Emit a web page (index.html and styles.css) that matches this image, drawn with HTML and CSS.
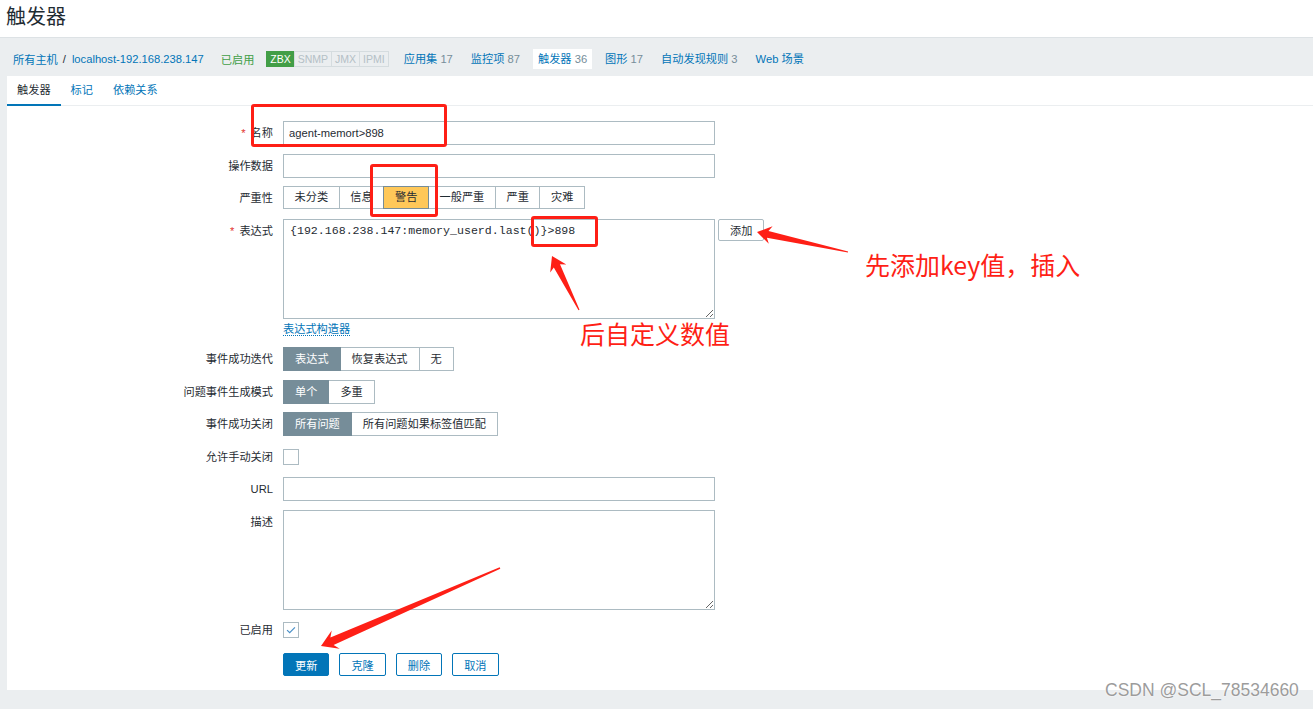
FILE: index.html
```html
<!DOCTYPE html>
<html lang="zh-CN">
<head>
<meta charset="utf-8">
<title>触发器</title>
<link rel="stylesheet" href="styles.css">
</head>
<body>
<header class="page-header">
  <h1 class="page-title">触发器</h1>
</header>

<nav class="host-nav">
  <ul class="breadcrumbs">
    <li><a href="#">所有主机</a></li>
    <li class="sep">/</li>
    <li><a href="#">localhost-192.168.238.147</a></li>
  </ul>
  <span class="status-on">已启用</span>
  <div class="avail">
    <span class="avail-item avail-on">ZBX</span><span class="avail-item">SNMP</span><span class="avail-item">JMX</span><span class="avail-item">IPMI</span>
  </div>
  <ul class="host-tabs">
    <li><a href="#">应用集</a> <span class="count">17</span></li>
    <li><a href="#">监控项</a> <span class="count">87</span></li>
    <li class="selected"><a href="#">触发器</a> <span class="count">36</span></li>
    <li><a href="#">图形</a> <span class="count">17</span></li>
    <li><a href="#">自动发现规则</a> <span class="count">3</span></li>
    <li><a href="#">Web 场景</a></li>
  </ul>
</nav>

<main class="panel">
  <ul class="tabs">
    <li class="tab active">触发器</li>
    <li class="tab">标记</li>
    <li class="tab">依赖关系</li>
  </ul>

  <form class="form-grid">
    <label class="form-label required">名称</label>
    <div class="form-field"><input class="text-input" type="text" value="agent-memort&gt;898"></div>

    <label class="form-label">操作数据</label>
    <div class="form-field"><input class="text-input" type="text" value=""></div>

    <label class="form-label">严重性</label>
    <div class="form-field">
      <div class="seg seg-severity">
        <span class="seg-item">未分类</span><span class="seg-item">信息</span><span class="seg-item seg-warning">警告</span><span class="seg-item">一般严重</span><span class="seg-item">严重</span><span class="seg-item">灾难</span>
      </div>
    </div>

    <label class="form-label required">表达式</label>
    <div class="form-field">
      <div class="expr-row">
        <textarea class="text-area mono">{192.168.238.147:memory_userd.last()}&gt;898</textarea>
        <button type="button" class="btn-grey">添加</button>
      </div>
      <div class="link-row"><a href="#" class="dotted-link">表达式构造器</a></div>
    </div>

    <label class="form-label">事件成功迭代</label>
    <div class="form-field">
      <div class="seg">
        <span class="seg-item seg-on">表达式</span><span class="seg-item">恢复表达式</span><span class="seg-item">无</span>
      </div>
    </div>

    <label class="form-label">问题事件生成模式</label>
    <div class="form-field">
      <div class="seg">
        <span class="seg-item seg-on">单个</span><span class="seg-item">多重</span>
      </div>
    </div>

    <label class="form-label">事件成功关闭</label>
    <div class="form-field">
      <div class="seg">
        <span class="seg-item seg-on">所有问题</span><span class="seg-item">所有问题如果标签值匹配</span>
      </div>
    </div>

    <label class="form-label">允许手动关闭</label>
    <div class="form-field check-field"><span class="checkbox"></span></div>

    <label class="form-label">URL</label>
    <div class="form-field"><input class="text-input" type="text" value=""></div>

    <label class="form-label">描述</label>
    <div class="form-field"><textarea class="text-area"></textarea></div>

    <label class="form-label">已启用</label>
    <div class="form-field check-field">
      <span class="checkbox"><svg class="check-mark" viewBox="0 0 16 16" width="14" height="14"><path d="M3.5 8.2 L6.5 11 L12.5 5" fill="none" stroke="#4a90c8" stroke-width="1.4"/></svg></span>
    </div>

    <div class="form-buttons">
      <button type="button" class="btn-main">更新</button>
      <button type="button" class="btn-alt">克隆</button>
      <button type="button" class="btn-alt">删除</button>
      <button type="button" class="btn-alt">取消</button>
    </div>
  </form>
</main>

<div class="annotations">
  <div class="mark-box box-name"></div>
  <div class="mark-box box-sev"></div>
  <div class="mark-box box-expr"></div>
  <svg class="arrows" width="1313" height="709" viewBox="0 0 1313 709">
    <polygon fill="#fe1f16" points="579.5,309.7 560.0,264.2 566.3,264.5 552,256 550.2,272.5 553.8,267.4 578.5,310.3"/>
    <polygon fill="#fe1f16" points="848.1,251.4 768.5,231.0 772.6,226.2 757,232 768.8,243.8 766.9,237.8 847.9,252.6"/>
    <polygon fill="#fe1f16" points="499.7,567.3 330.4,637.5 331.7,630.4 321,646 339.7,648.8 333.6,644.9 500.3,568.7"/>
  </svg>
  <div class="note note-add">先添加key值，插入</div>
  <div class="note note-value">后自定义数值</div>
</div>

<div class="watermark">CSDN @SCL_78534660</div>
</body>
</html>
```

FILE: styles.css
```css
* {
  box-sizing: border-box;
}

html, body {
  margin: 0;
  padding: 0;
}

body {
  position: relative;
  width: 1313px;
  height: 709px;
  overflow: hidden;
  background: #ebeef0;
  font-family: "Liberation Sans", "Noto Sans CJK SC", sans-serif;
  font-size: 11.2px;
  color: #1f2c33;
}

a {
  color: #0275b8;
  text-decoration: none;
}

ul {
  list-style: none;
  margin: 0;
  padding: 0;
}

/* ---------- header ---------- */
.page-header {
  height: 38px;
  background: #fff;
  border-bottom: 1px solid #dde2e5;
  padding-left: 6px;
}

.page-title {
  margin: 0;
  font-size: 20px;
  font-weight: normal;
  line-height: 34px;
  color: #1f2c33;
}

/* ---------- host navigation ---------- */
.host-nav {
  height: 38px;
  display: flex;
  align-items: center;
  padding: 4px 0 0 13px;
}

.breadcrumbs {
  display: flex;
  align-items: center;
}

.breadcrumbs .sep {
  margin: 0 6px 0 5px;
  color: #1f2c33;
}

.status-on {
  margin-left: 17px;
  color: #429e47;
}

.avail {
  display: flex;
  margin-left: 12px;
}

.avail-item {
  font-size: 10.5px;
  line-height: 14px;
  padding: 0 3px;
  border: 1px solid #d5dcdf;
  margin-left: -1px;
  color: #b4c0c6;
}

.avail-item:first-child {
  margin-left: 0;
}

.avail-on {
  background: #429e47;
  border-color: #429e47;
  color: #fff;
}

.host-tabs {
  display: flex;
  margin-left: 10px;
}

.host-tabs li {
  padding: 3px 5px;
  line-height: 14px;
  margin-right: 8px;
  white-space: nowrap;
}

.host-tabs li.selected {
  background: #fff;
}

.count {
  color: #768d99;
}

/* ---------- panel ---------- */
.panel {
  margin-left: 7px;
  height: 614px;
  background: #fff;
}

.tabs {
  display: flex;
  height: 30px;
  box-shadow: inset 0 -1px 0 #ebeef0;
}

.tab {
  padding: 0 10px;
  line-height: 28px;
  border-bottom: 2px solid transparent;
  color: #0275b8;
}

.tab.active {
  color: #1f2c33;
  border-bottom-color: #0275b8;
}

/* ---------- form ---------- */
.form-grid {
  display: grid;
  grid-template-columns: 266px 1fr;
  column-gap: 10px;
  row-gap: 8.5px;
  align-items: start;
  padding-top: 15px;
}

.form-label {
  text-align: right;
  line-height: 24px;
  white-space: nowrap;
  color: #1f2c33;
}

.required::before {
  content: "*";
  color: #e33734;
  margin-right: 5px;
}

.form-field {
  min-height: 24px;
}

.text-input {
  display: block;
  width: 432px;
  height: 24px;
  border: 1px solid #acbbc2;
  padding: 0 5px;
  font-family: "Liberation Sans", "Noto Sans CJK SC", sans-serif;
  font-size: 11.2px;
  color: #1f2c33;
  background: #fff;
  outline: none;
}

.text-area {
  display: block;
  width: 432px;
  height: 100px;
  margin: 0;
  border: 1px solid #acbbc2;
  padding: 4px 6px;
  font-family: "Liberation Sans", "Noto Sans CJK SC", sans-serif;
  font-size: 11.2px;
  line-height: 14px;
  color: #1f2c33;
  background: #fff;
  outline: none;
}

.text-area.mono {
  font-family: "Liberation Mono", monospace;
  font-size: 11.6px;
}

.expr-row {
  display: flex;
  align-items: flex-start;
}

.btn-grey {
  margin-left: 3px;
  height: 22px;
  padding: 0 11px;
  border: 1px solid #acbbc2;
  background: #fff;
  font-family: "Liberation Sans", "Noto Sans CJK SC", sans-serif;
  font-size: 11.2px;
  color: #1f2c33;
  border-radius: 2px;
}

.link-row {
  height: 20px;
  line-height: 20px;
}

.dotted-link {
  border-bottom: 1px dotted #0275b8;
}

/* segmented radio groups */
.seg {
  display: inline-flex;
}

.seg-item {
  height: 24px;
  line-height: 22px;
  padding: 0 11px;
  border: 1px solid #acbbc2;
  margin-left: -1px;
  background: #fff;
  color: #1f2c33;
  white-space: nowrap;
}

.seg-severity .seg-item {
  height: 23px;
  line-height: 21px;
  padding: 0 10.6px;
}

.seg-item:first-child {
  margin-left: 0;
}

.seg-on {
  background: #768d99;
  border-color: #768d99;
  color: #fff;
  position: relative;
}

.seg-warning {
  background: #ffc859;
  border-color: #768d99;
  position: relative;
}

/* checkbox */
.check-field {
  display: flex;
  align-items: center;
  height: 22px;
}

.checkbox {
  width: 16px;
  height: 16px;
  border: 1px solid #acbbc2;
  background: #fff;
  display: flex;
  align-items: center;
  justify-content: center;
}

/* buttons */
.form-buttons {
  grid-column: 2;
  display: flex;
  gap: 10px;
  margin-top: 2.5px;
}

.btn-main,
.btn-alt {
  height: 23px;
  padding: 0 11px;
  font-family: "Liberation Sans", "Noto Sans CJK SC", sans-serif;
  font-size: 11.2px;
  border: 1px solid #0275b8;
  border-radius: 2px;
}

.btn-main {
  background: #0275b8;
  color: #fff;
}

.btn-alt {
  background: #fff;
  color: #0275b8;
}

/* ---------- annotations (overlay) ---------- */
.annotations {
  position: absolute;
  left: 0;
  top: 0;
  width: 1313px;
  height: 709px;
  pointer-events: none;
}

.arrows {
  position: absolute;
  left: 0;
  top: 0;
}

.mark-box {
  position: absolute;
  border: 3px solid #fe1f16;
  border-radius: 3px;
}

.box-name {
  left: 251px;
  top: 104px;
  width: 196px;
  height: 43px;
}

.box-sev {
  left: 370px;
  top: 164px;
  width: 68px;
  height: 53px;
}

.box-expr {
  left: 531px;
  top: 216px;
  width: 67px;
  height: 31px;
}

.note {
  position: absolute;
  font-family: "Noto Sans CJK SC", sans-serif;
  font-size: 25px;
  line-height: 25px;
  color: #fe1f16;
  white-space: nowrap;
}

.note-add {
  left: 865px;
  top: 252px;
}

.note-value {
  left: 580px;
  top: 321px;
}

.watermark {
  position: absolute;
  left: 1105px;
  top: 682px;
  font-family: "Liberation Sans", sans-serif;
  font-size: 17.5px;
  line-height: 1;
  color: #9c9c9c;
  text-shadow: 0 0 2px #fff, 0 0 1px #fff;
  white-space: nowrap;
}
```
